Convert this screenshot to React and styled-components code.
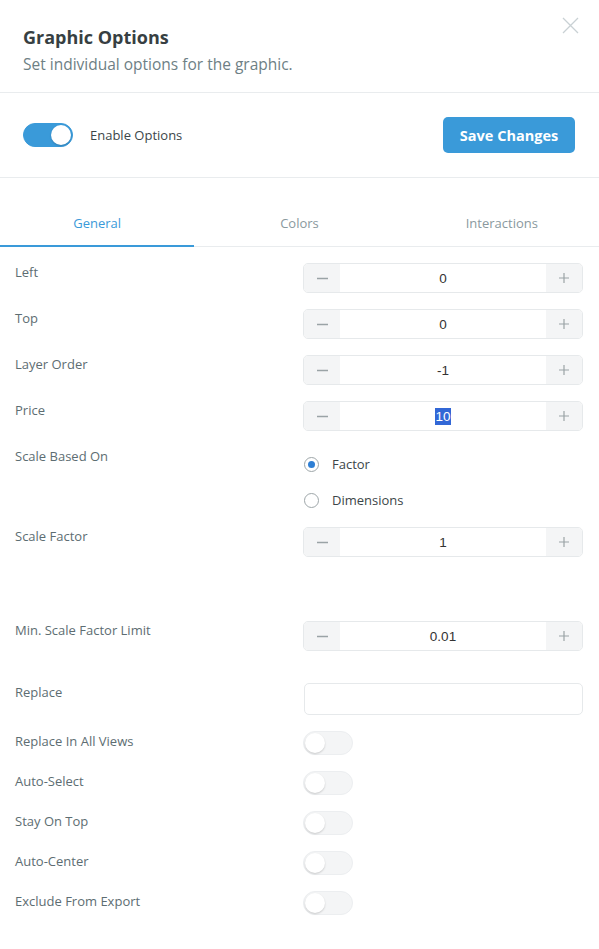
import React from "react";
import styled, { createGlobalStyle } from "styled-components";

const GlobalStyle = createGlobalStyle`
  body {
    margin: 0;
    background: #ffffff;
    font-family: "Open Sans", "Noto Sans", sans-serif;
    color: #3c4649;
  }
  * { box-sizing: border-box; }
`;

const Panel = styled.div`
  position: relative;
  width: 599px;
  background: #fff;
`;

const Header = styled.div`
  padding: 24px 23px 17px;
  border-bottom: 1px solid #e9ecee;
`;

const Title = styled.h1`
  margin: 0;
  font-size: 18px;
  line-height: 26px;
  font-weight: 700;
  color: #373f42;
`;

const Subtitle = styled.p`
  margin: 3px 0 0;
  font-size: 15.5px;
  line-height: 22px;
  color: #6e7f85;
`;

const Close = styled.button`
  position: absolute;
  top: 17px;
  right: 20px;
  width: 17px;
  height: 17px;
  padding: 0;
  border: none;
  background: none;
  color: #c9d1d4;
`;

const ActionBar = styled.div`
  height: 85px;
  display: flex;
  align-items: center;
  justify-content: space-between;
  padding: 0 24px 0 23px;
  border-bottom: 1px solid #e9ecee;
`;

const ToggleLabel = styled.label`
  display: flex;
  align-items: center;
  gap: 17px;
  font-size: 13px;
  color: #3c4649;
`;

const Track = styled.span`
  position: relative;
  display: block;
  width: 50px;
  height: 24px;
  border-radius: 12px;
  background: ${(p) => (p.$on ? "#3a9ad9" : "#f4f5f6")};
  border: 1px solid ${(p) => (p.$on ? "#3a9ad9" : "#eceef0")};
`;

const Knob = styled.span`
  position: absolute;
  top: 1px;
  left: ${(p) => (p.$on ? "27px" : "1px")};
  width: 20px;
  height: 20px;
  border-radius: 50%;
  background: #fff;
  box-shadow: 0 1px 2px rgba(0, 0, 0, 0.18);
`;

const SaveButton = styled.button`
  width: 132px;
  height: 36px;
  border: none;
  border-radius: 5px;
  background: #3a9ad9;
  color: #fff;
  font-family: inherit;
  font-size: 14.5px;
  font-weight: 700;
`;

const TabBar = styled.div`
  display: flex;
  gap: 8px;
  padding-top: 23px;
  border-bottom: 1px solid #e9ecee;
`;

const Tab = styled.div`
  flex: 1;
  height: 46px;
  display: flex;
  align-items: center;
  justify-content: center;
  font-size: 13px;
  color: ${(p) => (p.$active ? "#3a9ad9" : "#8a999e")};
  border-bottom: 2px solid ${(p) => (p.$active ? "#3a9ad9" : "transparent")};
  margin-bottom: -1px;
`;

const Form = styled.div`
  padding: 16px 16px 30px 15px;
`;

const Row = styled.div`
  display: flex;
  justify-content: space-between;
  margin-bottom: ${(p) => p.$mb || 16}px;
`;

const Label = styled.div`
  font-size: 13px;
  line-height: ${(p) => p.$lh || 18}px;
  color: #5d6d72;
`;

const Control = styled.div`
  width: 280px;
`;

const Stepper = styled.div`
  display: flex;
  height: 30px;
  border: 1px solid #e6e9eb;
  border-radius: 5px;
  overflow: hidden;
`;

const StepButton = styled.span`
  width: 36px;
  display: flex;
  align-items: center;
  justify-content: center;
  background: #f4f5f6;
  color: #9aa3a6;
`;

const Value = styled.div`
  flex: 1;
  display: flex;
  align-items: center;
  justify-content: center;
  font-family: "Liberation Sans", Arial, sans-serif;
  font-size: 13.5px;
  color: #333;
`;

const Selected = styled.span`
  background: #3267d6;
  color: #fff;
  line-height: 17px;
`;

const RadioGroup = styled.div`
  display: flex;
  flex-direction: column;
  gap: 2px;
`;

const RadioItem = styled.label`
  height: 34px;
  display: flex;
  align-items: center;
  gap: 13px;
  font-size: 13px;
  color: #3c4649;
`;

const RadioCircle = styled.span`
  position: relative;
  width: 15px;
  height: 15px;
  margin-left: 1px;
  border-radius: 50%;
  border: 1px solid #9ea6a9;
  background: #fff;

  &::after {
    content: "";
    display: ${(p) => (p.$checked ? "block" : "none")};
    position: absolute;
    top: 3px;
    left: 3px;
    width: 7px;
    height: 7px;
    border-radius: 50%;
    background: #2f7fd4;
  }
`;

const TextInput = styled.div`
  height: 32px;
  margin-left: 1px;
  border: 1px solid #e6e9eb;
  border-radius: 5px;
`;

const Minus = () => (
  <svg width="11" height="11" viewBox="0 0 11 11">
    <path d="M0 5.5h11" stroke="currentColor" strokeWidth="1.3" />
  </svg>
);

const Plus = () => (
  <svg width="10" height="10" viewBox="0 0 10 10">
    <path d="M0 5h10M5 0v10" stroke="currentColor" strokeWidth="1.2" />
  </svg>
);

const Switch = ({ on }) => (
  <Track $on={on}>
    <Knob $on={on} />
  </Track>
);

const NumberField = ({ value, selected }) => (
  <Stepper>
    <StepButton>
      <Minus />
    </StepButton>
    <Value>{selected ? <Selected>{value}</Selected> : value}</Value>
    <StepButton>
      <Plus />
    </StepButton>
  </Stepper>
);

const toggles = [
  "Replace In All Views",
  "Auto-Select",
  "Stay On Top",
  "Auto-Center",
  "Exclude From Export",
];

export default function App() {
  return (
    <>
      <GlobalStyle />
      <Panel>
        <Header>
          <Title>Graphic Options</Title>
          <Subtitle>Set individual options for the graphic.</Subtitle>
        </Header>
        <Close aria-label="Close">
          <svg width="17" height="17" viewBox="0 0 17 17">
            <path d="M1 1l15 15M16 1L1 16" stroke="currentColor" strokeWidth="1.3" />
          </svg>
        </Close>

        <ActionBar>
          <ToggleLabel>
            <Switch on />
            Enable Options
          </ToggleLabel>
          <SaveButton>Save Changes</SaveButton>
        </ActionBar>

        <TabBar>
          <Tab $active>General</Tab>
          <Tab>Colors</Tab>
          <Tab>Interactions</Tab>
        </TabBar>

        <Form>
          <Row>
            <Label>Left</Label>
            <Control><NumberField value="0" /></Control>
          </Row>
          <Row>
            <Label>Top</Label>
            <Control><NumberField value="0" /></Control>
          </Row>
          <Row>
            <Label>Layer Order</Label>
            <Control><NumberField value="-1" /></Control>
          </Row>
          <Row>
            <Label>Price</Label>
            <Control><NumberField value="10" selected /></Control>
          </Row>
          <Row $mb={10}>
            <Label>Scale Based On</Label>
            <Control>
              <RadioGroup>
                <RadioItem>
                  <RadioCircle $checked />
                  Factor
                </RadioItem>
                <RadioItem>
                  <RadioCircle />
                  Dimensions
                </RadioItem>
              </RadioGroup>
            </Control>
          </Row>
          <Row $mb={64}>
            <Label>Scale Factor</Label>
            <Control><NumberField value="1" /></Control>
          </Row>
          <Row $mb={32}>
            <Label>Min. Scale Factor Limit</Label>
            <Control><NumberField value="0.01" /></Control>
          </Row>
          <Row>
            <Label>Replace</Label>
            <Control><TextInput /></Control>
          </Row>
          {toggles.map((t) => (
            <Row key={t}>
              <Label $lh={20}>{t}</Label>
              <Control><Switch /></Control>
            </Row>
          ))}
        </Form>
      </Panel>
    </>
  );
}
